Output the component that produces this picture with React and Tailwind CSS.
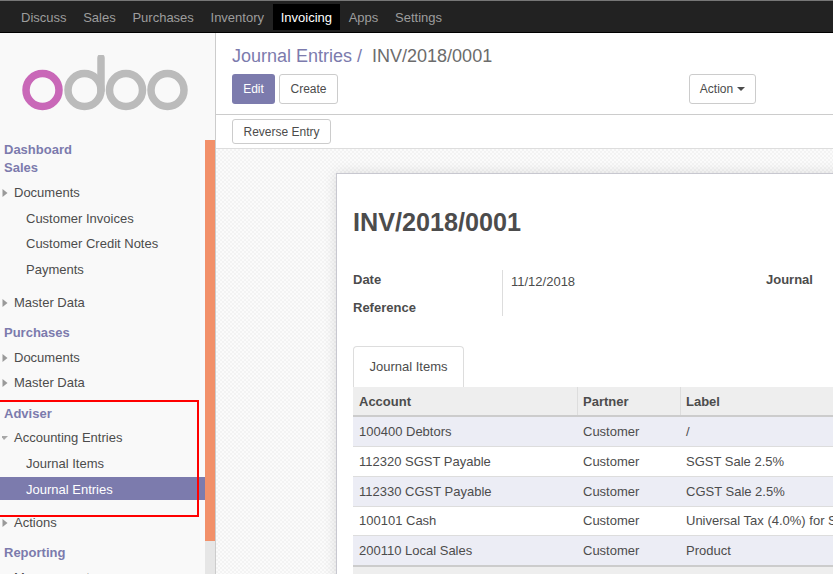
const F = { fontFamily: '"Liberation Sans", Arial, sans-serif' };

function Caret({ open }) {
  return (
    <svg width="6" height="10" viewBox="0 0 6 10" className="shrink-0">
      {open ? <path d="M-1 3 L6 3 L2 7 Z" fill="#a8a8a8" /> : <path d="M0.5 1 L5.5 5 L0.5 9 Z" fill="#9a9a9a" />}
    </svg>
  );
}

function Head({ children, className = "" }) {
  return <div className={"pl-1 font-bold text-[13px] leading-[18px] text-[#7c7bad] " + className}>{children}</div>;
}

function Group({ open, children, className = "" }) {
  return (
    <div className={"flex items-center h-[18px] pl-[2px] text-[13px] text-[#4c4c4c] " + className}>
      <Caret open={open} />
      <span className="ml-[6px]">{children}</span>
    </div>
  );
}

function Leaf({ children, className = "" }) {
  return <div className={"pl-[26px] h-[18px] leading-[18px] text-[13px] text-[#4c4c4c] " + className}>{children}</div>;
}

function Logo() {
  return (
    <svg width="170" height="56" viewBox="0 0 170 56" className="ml-[21px] mt-[22px] block">
      <circle cx="21.5" cy="35" r="16.5" fill="none" stroke="#c968b8" strokeWidth="7.5" />
      <circle cx="63.5" cy="35" r="16.5" fill="none" stroke="#bbbbbb" strokeWidth="7.5" />
      <path d="M80 3 L80 35" fill="none" stroke="#bbbbbb" strokeWidth="7.5" strokeLinecap="round" />
      <circle cx="105" cy="35" r="16.5" fill="none" stroke="#bbbbbb" strokeWidth="7.5" />
      <circle cx="146.5" cy="35" r="16.5" fill="none" stroke="#bbbbbb" strokeWidth="7.5" />
    </svg>
  );
}

function Sidebar() {
  return (
    <aside className="relative w-[216px] shrink-0 h-full bg-[#f9f9f9] border-r border-[#cccccc] overflow-hidden">
      <Logo />
      <div className="mt-[30px]">
        <Head className="h-[18px]">Dashboard</Head>
        <Head className="h-[18px]">Sales</Head>
        <Group className="mt-[7px]">Documents</Group>
        <Leaf className="mt-[8px]">Customer Invoices</Leaf>
        <Leaf className="mt-[7px]">Customer Credit Notes</Leaf>
        <Leaf className="mt-[8px]">Payments</Leaf>
        <Group className="mt-[15px]">Master Data</Group>
        <Head className="mt-[12px]">Purchases</Head>
        <Group className="mt-[7px]">Documents</Group>
        <Group className="mt-[7px]">Master Data</Group>
        <Head className="mt-[13px]">Adviser</Head>
        <Group open className="mt-[6px]">Accounting Entries</Group>
        <Leaf className="mt-[8px]">Journal Items</Leaf>
        <div className="mt-[4px] w-[205px] h-[23px] pl-[26px] leading-[25px] text-[13px] text-white bg-[#7c7bad]">Journal Entries</div>
        <Group className="mt-[14px]">Actions</Group>
        <Head className="mt-[12px]">Reporting</Head>
        <Group className="mt-[7px]">Management</Group>
      </div>
      <div className="absolute top-[107px] right-0 bottom-0 w-[10px] bg-[#e6e6e6]">
        <div className="h-[401px] bg-[#f29069]" />
      </div>
    </aside>
  );
}

const rows = [
  ["100400 Debtors", "Customer", "/", true, 30],
  ["112320 SGST Payable", "Customer", "SGST Sale 2.5%", false, 30],
  ["112330 CGST Payable", "Customer", "CGST Sale 2.5%", true, 30],
  ["100101 Cash", "Customer", "Universal Tax (4.0%) for Sales", false, 29],
  ["200110 Local Sales", "Customer", "Product", true, 30],
];

function Btn({ children, className = "" }) {
  return (
    <div className={"flex items-center justify-center bg-white border border-[#cccccc] rounded-[3px] text-[12px] text-[#4c4c4c] " + className}>{children}</div>
  );
}

function Main() {
  return (
    <main className="flex-1 min-w-0 h-full flex flex-col overflow-hidden bg-white">
      <div className="h-[82px] shrink-0 border-b border-[#cccccc] pl-4 pt-[12px]">
        <div className="h-[22px] text-[18px] leading-[22px] whitespace-nowrap">
          <span className="text-[#7c7bad]">Journal Entries /</span>
          <span className="ml-[10px] text-[#6c6c6c]">INV/2018/0001</span>
        </div>
        <div className="mt-[7px] flex">
          <div className="w-[43px] h-[30px] rounded-[3px] bg-[#7c7bad] text-white text-[12px] flex items-center justify-center">Edit</div>
          <Btn className="ml-1 w-[59px] h-[30px]">Create</Btn>
          <Btn className="ml-[351px] w-[67px] h-[30px]">
            Action
            <span className="ml-1 w-0 h-0 border-l-4 border-r-4 border-t-4 border-l-transparent border-r-transparent border-t-[#4c4c4c]" />
          </Btn>
        </div>
      </div>
      <div className="h-[34px] shrink-0 border-b border-[#dddddd] pl-4 pt-[4px]">
        <Btn className="w-[99px] h-[25px]">Reverse Entry</Btn>
      </div>
      <div
        className="flex-1 min-h-0 pl-[120px] pt-[24px] overflow-hidden bg-[#fbfbfb]"
        style={{
          backgroundImage:
            "linear-gradient(45deg,#f3f3f3 25%,transparent 25%,transparent 75%,#f3f3f3 75%),linear-gradient(45deg,#f3f3f3 25%,transparent 25%,transparent 75%,#f3f3f3 75%)",
          backgroundSize: "4px 4px",
          backgroundPosition: "0 0,2px 2px",
        }}
      >
        <div className="w-[600px] h-[500px] bg-white border border-[#c8c8d0] shadow-[0_0_12px_rgba(0,0,0,0.12)] pl-4 pt-[34px]">
          <h1 className="text-[25.2px] leading-[28px] font-bold text-[#4c4c4c]">INV/2018/0001</h1>
          <div className="mt-[34px] h-[46px] flex text-[13px] text-[#4c4c4c]">
            <div className="w-[149px] shrink-0 font-bold">
              <div className="h-[18px] leading-[18px] mt-[1px]">Date</div>
              <div className="h-[18px] leading-[18px] mt-[10px]">Reference</div>
            </div>
            <div className="border-l border-[#dddddd] pl-2 w-[264px] pt-[4px] leading-[16px]">11/12/2018</div>
            <div className="font-bold leading-[18px] mt-[1px]">Journal</div>
          </div>
          <div className="mt-[30px] flex">
            <div className="w-[111px] h-[41px] border border-b-0 border-[#dddddd] rounded-t-[4px] text-[13px] text-[#4c4c4c] flex items-center justify-center bg-white">Journal Items</div>
          </div>
          <div className="text-[13px] text-[#4c4c4c]">
            <div className="flex h-[30px] items-start bg-[#eeeeee] border-b-2 border-[#cccccc] font-bold">
              <div className="w-[225px] h-full pl-[6px] leading-[29px] border-r border-[#dddddd]">Account</div>
              <div className="w-[103px] h-full pl-[5px] leading-[29px] border-r border-[#dddddd]">Partner</div>
              <div className="pl-[5px] leading-[29px]">Label</div>
            </div>
            {rows.map(([a, p, l, alt, h]) => (
              <div key={a} style={{ height: h }} className={"flex items-center border-b border-[#dddddd] whitespace-nowrap " + (alt ? "bg-[#ecedf5]" : "bg-white")}>
                <div className="w-[225px] pl-[6px]">{a}</div>
                <div className="w-[103px] pl-[5px]">{p}</div>
                <div className="pl-[5px]">{l}</div>
              </div>
            ))}
            <div className="h-[40px] bg-[#eeeeee] border-t-2 border-[#cccccc] -mt-px" />
          </div>
        </div>
      </div>
    </main>
  );
}

export default function App() {
  const nav = ["Discuss", "Sales", "Purchases", "Inventory", "Invoicing", "Apps", "Settings"];
  return (
    <div style={F} className="relative w-[833px] h-[574px] overflow-hidden flex flex-col bg-white">
      <nav className="h-[33px] shrink-0 bg-[#222222] border-t border-t-[#777777] border-b border-b-black flex items-center gap-[0.7px] pl-[13px] text-[13px]">
        {nav.map((n) => (
          <div key={n} className={"px-2 h-[26px] leading-[27px] " + (n === "Invoicing" ? "bg-black text-white" : "text-[#9d9d9d]")}>{n}</div>
        ))}
      </nav>
      <div className="flex-1 min-h-0 flex">
        <Sidebar />
        <Main />
      </div>
      <div className="absolute left-[-2px] top-[400px] w-[201px] h-[117px] border-2 border-[#ff0000]" />
    </div>
  );
}
